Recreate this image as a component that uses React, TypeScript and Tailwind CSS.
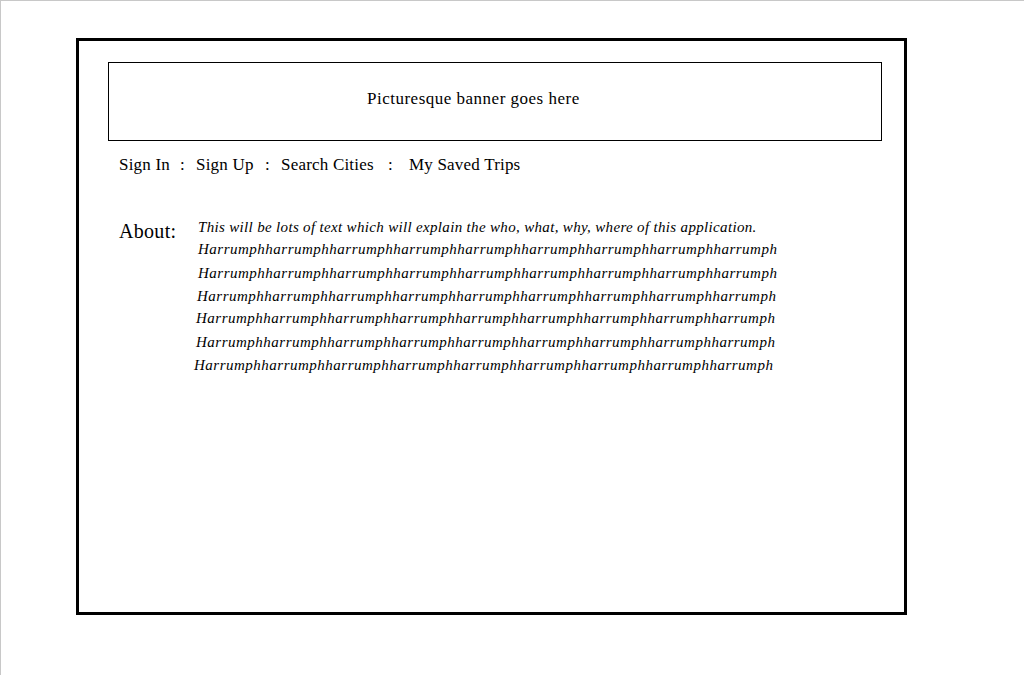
export default function App() {
  const lines = [
    { text: "This will be lots of text which will explain the who, what, why, where of this application.", cls: "ml-0 h-[22px] tracking-[0.33px]" },
    { text: "Harrumphharrumphharrumphharrumphharrumphharrumphharrumphharrumphharrumph", cls: "ml-0 h-[24px]" },
    { text: "Harrumphharrumphharrumphharrumphharrumphharrumphharrumphharrumphharrumph", cls: "ml-0 h-[23px]" },
    { text: "Harrumphharrumphharrumphharrumphharrumphharrumphharrumphharrumphharrumph", cls: "ml-[-1px] h-[22px]" },
    { text: "Harrumphharrumphharrumphharrumphharrumphharrumphharrumphharrumphharrumph", cls: "ml-[-2px] h-[24px]" },
    { text: "Harrumphharrumphharrumphharrumphharrumphharrumphharrumphharrumphharrumph", cls: "ml-[-2px] h-[23px]" },
    { text: "Harrumphharrumphharrumphharrumphharrumphharrumphharrumphharrumphharrumph", cls: "ml-[-4px] h-[23px]" },
  ];

  return (
    <div
      className="w-[1024px] h-[675px] bg-white border-t border-l border-[#c8c8c8] text-black overflow-hidden"
      style={{ fontFamily: '"Liberation Serif", serif' }}
    >
      <div className="ml-[75px] mt-[37px] w-[831px] h-[577px] border-[3px] border-black pt-[21px] pl-[29px]">
        <div className="w-[774px] h-[79px] border border-black pt-[26px] pl-[258px] text-[17px] leading-[20px] tracking-[0.5px]">
          Picturesque banner goes here
        </div>

        <div className="flex items-center mt-[14px] ml-[11px] text-[17px] leading-[20px] tracking-[0.2px] whitespace-nowrap">
          <span className="w-[61px]">Sign In</span>
          <span className="w-[16px]">:</span>
          <span className="w-[69px]">Sign Up</span>
          <span className="w-[16px]">:</span>
          <span className="w-[107px]">Search Cities</span>
          <span className="w-[21px]">:</span>
          <span>My Saved Trips</span>
        </div>

        <div className="flex mt-[41px] ml-[11px]">
          <div className="w-[79px] text-[20px] leading-[24px] pt-[3px] tracking-[0.3px]">About:</div>
          <div className="flex flex-col italic text-[15px] tracking-[0.5px]">
            {lines.map((l, i) => (
              <p key={i} className={`${l.cls} leading-[22px] whitespace-nowrap`}>
                {l.text}
              </p>
            ))}
          </div>
        </div>
      </div>
    </div>
  );
}
